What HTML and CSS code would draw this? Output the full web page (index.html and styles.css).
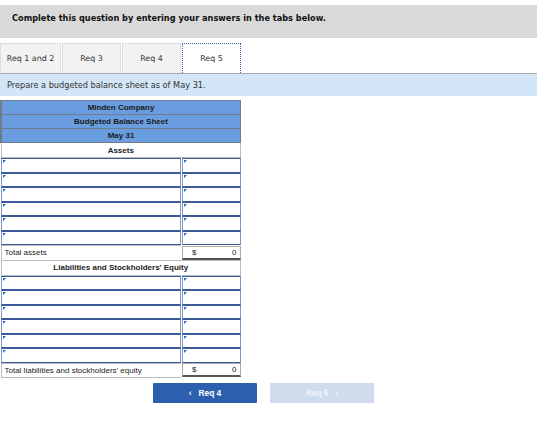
FILE: index.html
```html
<!DOCTYPE html>
<html lang="en">
  <head>
    <meta charset="UTF-8" />
    <title>Req 5</title>
    <link rel="stylesheet" href="styles.css">
  </head>
  <body>
    <div class="page">
      <div class="instructions">
        Complete this question by entering your answers in the tabs below.
      </div>

      <div class="tabs">
        <div class="tab">Req 1 and 2</div>
        <div class="tab">Req 3</div>
        <div class="tab">Req 4</div>
        <div class="tab active">Req 5</div>
      </div>

      <div class="prompt">Prepare a budgeted balance sheet as of May 31.</div>

      <table class="sheet">
        <tr><td colspan="2" class="head">Minden Company</td></tr>
        <tr><td colspan="2" class="head">Budgeted Balance Sheet</td></tr>
        <tr><td colspan="2" class="head">May 31</td></tr>
        <tr><td colspan="2" class="section">Assets</td></tr>
        <tr class="entry"><td><span class="field"></span></td><td><span class="field"></span></td></tr>
        <tr class="entry"><td><span class="field"></span></td><td><span class="field"></span></td></tr>
        <tr class="entry"><td><span class="field"></span></td><td><span class="field"></span></td></tr>
        <tr class="entry"><td><span class="field"></span></td><td><span class="field"></span></td></tr>
        <tr class="entry"><td><span class="field"></span></td><td><span class="field"></span></td></tr>
        <tr class="entry"><td><span class="field"></span></td><td><span class="field"></span></td></tr>
        <tr class="total">
          <td class="label">Total assets</td>
          <td class="amount"><span>$</span><span>0</span></td>
        </tr>
        <tr><td colspan="2" class="section">Liabilities and Stockholders' Equity</td></tr>
        <tr class="entry"><td><span class="field"></span></td><td><span class="field"></span></td></tr>
        <tr class="entry"><td><span class="field"></span></td><td><span class="field"></span></td></tr>
        <tr class="entry"><td><span class="field"></span></td><td><span class="field"></span></td></tr>
        <tr class="entry"><td><span class="field"></span></td><td><span class="field"></span></td></tr>
        <tr class="entry"><td><span class="field"></span></td><td><span class="field"></span></td></tr>
        <tr class="entry"><td><span class="field"></span></td><td><span class="field"></span></td></tr>
        <tr class="total">
          <td class="label">Total liabilities and stockholders' equity</td>
          <td class="amount"><span>$</span><span>0</span></td>
        </tr>
      </table>

      <div class="nav">
        <button class="nav-btn prev">&lsaquo;&nbsp;&nbsp;&nbsp;Req 4</button>
        <button class="nav-btn next" disabled>Req 5&nbsp;&nbsp;&nbsp;&rsaquo;</button>
      </div>
    </div>
  </body>
</html>
```

FILE: styles.css
```css
body {
  margin: 0;
  background: #fff;
  font-family: "DejaVu Sans", Verdana, sans-serif;
  color: #222;
}

.page {
  width: 537px;
  padding-top: 5px;
}

.instructions {
  height: 33px;
  box-sizing: border-box;
  padding: 8px 12px 0;
  background: #d9d9d9;
  font-size: 8.2px;
  font-weight: bold;
  color: #111;
}

.tabs {
  display: flex;
  margin-top: 5px;
  height: 30px;
  border-bottom: 1px solid #aaa;
}

.tab {
  width: 59px;
  margin-right: 1px;
  box-sizing: border-box;
  display: flex;
  align-items: center;
  justify-content: center;
  background: #f2f2f2;
  border: 1px solid #ddd;
  border-bottom: none;
  font-size: 7.9px;
  color: #333;
}

.tab:first-child {
  width: 61px;
}

.tab.active {
  background: #fff;
  border: 1px dotted #3a63b0;
  border-bottom: none;
}

.prompt {
  height: 22px;
  box-sizing: border-box;
  padding: 6px 7px 0;
  background: #d3e6f7;
  font-size: 8.2px;
  color: #333;
}

/* balance sheet */
.sheet {
  margin-top: 4px;
  width: 241px;
  border-collapse: collapse;
  font-family: "Liberation Sans", Arial, sans-serif;
  font-size: 8px;
}

.sheet td {
  padding: 0;
}

.head {
  height: 13px;
  background: #6a9de0;
  border: 1px solid #6f7c8c;
  border-left-width: 2px;
  text-align: center;
  font-weight: bold;
  color: #1a1a1a;
}

.section {
  height: 14px;
  border: 1px solid #bbb;
  text-align: center;
  font-weight: bold;
  color: #222;
}

.entry td {
  height: 14.5px;
  padding: 0;
}

.entry td:first-child {
  width: 180px;
}

.field {
  position: relative;
  display: block;
  height: 14.5px;
  box-sizing: border-box;
  border: 1px solid #7d99cc;
  border-top: 1px solid #3b5a98;
  border-bottom: 1px solid #3b5a98;
  background: #fff;
}

.field::before {
  content: "";
  position: absolute;
  left: 1px;
  top: 1px;
  border-top: 3px solid #2b64c8;
  border-right: 3px solid transparent;
}

.entry td:last-child .field {
  margin-left: 1px;
}

.total td {
  height: 13px;
}

.total .label {
  padding-left: 3px;
  border: 1px solid #bbb;
  border-right: none;
  color: #222;
}

.total .amount {
  display: flex;
  justify-content: space-between;
  align-items: center;
  height: 14px;
  box-sizing: border-box;
  padding: 0 3px 0 9px;
  margin-left: 1px;
  border: 1px solid #aaa;
  border-bottom: 2px solid #555;
}

.nav {
  display: flex;
  gap: 13px;
  margin-top: 5px;
  padding-left: 153px;
}

.nav-btn {
  width: 104px;
  height: 20px;
  border: none;
  border-radius: 1px;
  font-family: "Liberation Sans", Arial, sans-serif;
  font-size: 8.4px;
  font-weight: bold;
  color: #fff;
}

.prev {
  background: #2c5fae;
}

.next {
  background: #cfdcee;
  color: #f2f5fa;
}
```
